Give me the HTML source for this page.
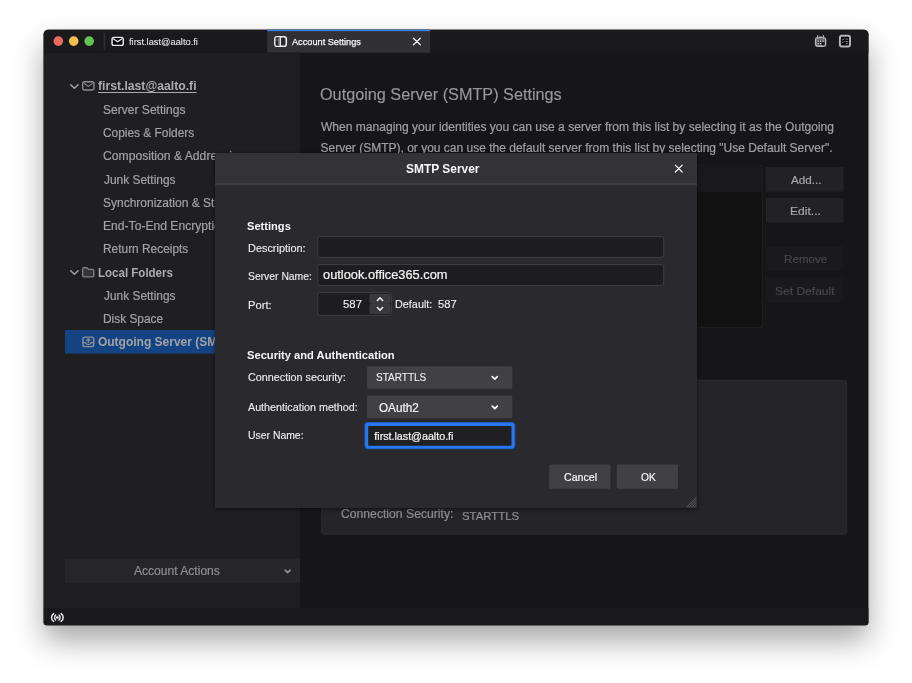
<!DOCTYPE html>
<html lang="en">
<head>
<meta charset="utf-8">
<title>Account Settings</title>
<style>
html,body{margin:0;padding:0;}
body{width:912px;height:683px;overflow:hidden;background:#fff;position:relative;
 font-family:"Liberation Sans",sans-serif;}
.abs{position:absolute;}
#shadow{position:absolute;left:44px;top:30px;width:824px;height:595px;border-radius:5px 5px 3px 3px;
 box-shadow:0 15px 30px rgba(0,0,0,0.36),0 0 1.5px rgba(0,0,0,0.4);}
#stage{position:absolute;left:0;top:0;width:912px;height:683px;}
.tl{position:absolute;left:0;top:0;width:912px;height:683px;will-change:transform;}
.t{position:absolute;white-space:pre;line-height:1;transform-origin:0 0;}
</style>
</head>
<body>
<div id="shadow"></div>
<div id="stage">

<svg class="abs" style="left:0;top:0" width="912" height="683" viewBox="0 0 912 683">
  <defs>
    <clipPath id="winclip">
      <path d="M43.65 34.3 a4.5 4.5 0 0 1 4.5 -4.5 H863.9 a4.5 4.5 0 0 1 4.5 4.5 V622.3 a3 3 0 0 1 -3 3 H46.65 a3 3 0 0 1 -3 -3 Z"/>
    </clipPath>
  </defs>
  <g clip-path="url(#winclip)">
    <rect x="40" y="25" width="835" height="605" fill="#161618"/>
    <!-- tab bar -->
    <rect x="40" y="25" width="835" height="27.7" fill="#1a1a1c"/>
    <rect x="267.1" y="25" width="163" height="27.7" fill="#313134"/>
    <rect x="267.1" y="25" width="163" height="6.15" fill="#3a84ea"/>
    <!-- sidebar / status -->
    <rect x="40" y="52.7" width="260" height="555.3" fill="#1f1f21"/>
    <rect x="40" y="608" width="835" height="22" fill="#19191b"/>
    <rect x="65" y="330" width="235" height="23.6" fill="#144383"/>
    <rect x="65" y="558.75" width="235" height="24.25" fill="#262628"/>
    <!-- list + buttons + details -->
    <rect x="321.3" y="165.8" width="441.2" height="161.4" fill="#111112" stroke="#252527" stroke-width="0.7"/>
    <rect x="321.7" y="166.2" width="440.4" height="25.8" fill="#19191b"/>
    <rect x="766" y="167" width="77.5" height="24.5" fill="#222224"/>
    <rect x="766" y="198" width="77.5" height="24.5" fill="#222224"/>
    <rect x="766" y="246.5" width="77.5" height="24.3" fill="#1a1a1c"/>
    <rect x="766" y="277.5" width="77.5" height="24.5" fill="#1a1a1c"/>
    <rect x="321.6" y="380.3" width="525.1" height="153.9" rx="2" fill="#252527" stroke="#323234" stroke-width="0.7"/>
  </g>

  <!-- traffic lights -->
  <circle cx="58.3" cy="41.1" r="4.8" fill="#ec6a5e"/>
  <circle cx="73.7" cy="41.1" r="4.8" fill="#f4bf4f"/>
  <circle cx="89.2" cy="41.1" r="4.8" fill="#61c554"/>
  <rect x="103.7" y="33.1" width="1.1" height="16.6" fill="#373739"/>
  <!-- mail icon -->
  <rect x="112.05" y="37.35" width="11.2" height="8" rx="1.9" fill="#050506" stroke="#ececee" stroke-width="1.45"/>
  <path d="M113.6 38.9 L117.65 41.8 L121.7 38.9" fill="none" stroke="#ececee" stroke-width="1.25" stroke-linecap="round" stroke-linejoin="round"/>
  <!-- account settings tab icon -->
  <rect x="274.9" y="36.7" width="11.4" height="9.6" rx="2.3" fill="#2a2a2c" stroke="#f1f1f2" stroke-width="1.6"/>
  <rect x="275.7" y="37.5" width="4" height="8" fill="#232324"/>
  <rect x="278" y="37.5" width="1.7" height="8" fill="#6e6e70"/>
  <rect x="276.6" y="39" width="0.9" height="2" fill="#8a8a8c"/>
  <rect x="279.65" y="36.8" width="1.3" height="9.4" fill="#f1f1f2"/>
  <!-- tab close -->
  <path d="M413.4 38.2 L420.3 44.8 M420.3 38.2 L413.4 44.8" stroke="#f2f2f3" stroke-width="1.25" stroke-linecap="round"/>
  <!-- calendar icon -->
  <rect x="815.7" y="37.8" width="9.8" height="8.3" rx="2.2" fill="#2c2c2e" stroke="#b7b7b9" stroke-width="1.6"/>
  <rect x="816.4" y="37.4" width="8.4" height="2.4" fill="#77777a"/>
  <path d="M817.6 35.7 v2.5 M823.5 35.7 v2.5" stroke="#b0b0b2" stroke-width="1.25" fill="none" stroke-linecap="round"/>
  <rect x="818.9" y="36.5" width="3.3" height="1.3" rx="0.4" fill="#c4c4c6"/>
  <g fill="#dededf">
    <rect x="817.3" y="40.4" width="1.5" height="1.4"/><rect x="819.8" y="40.4" width="1.5" height="1.4"/><rect x="822.3" y="40.4" width="1.5" height="1.4"/>
    <rect x="817.3" y="42.9" width="1.5" height="1.4"/><rect x="819.8" y="42.9" width="1.5" height="1.4"/>
  </g>
  <rect x="822" y="42.4" width="2.6" height="2.9" fill="#0c0c0d"/>
  <!-- tasks icon -->
  <rect x="839.9" y="35.75" width="10.1" height="10.65" rx="2" fill="#060607" stroke="#b4b4b6" stroke-width="1.95"/>
  <g stroke="#8a8a8c" stroke-width="0.95" fill="none">
    <path d="M845.6 39.1 h2.6 M845.6 41.5 h2.6 M845.6 43.7 h2.6"/>
    <path d="M842 39.4 l0.9 0.8 l1.6 -1.8 M842 42 l0.9 0.8 l1.6 -1.8" stroke-width="0.9"/>
  </g>

  <!-- sidebar chevrons -->
  <path d="M70.7 84.7 L74.4 88.3 L78.1 84.7" fill="none" stroke="#a3a3a6" stroke-width="1.45" stroke-linecap="round" stroke-linejoin="round"/>
  <path d="M70.7 270.7 L74.4 274.3 L78.1 270.7" fill="none" stroke="#a3a3a6" stroke-width="1.45" stroke-linecap="round" stroke-linejoin="round"/>
  <!-- mail icon -->
  <rect x="82.7" y="81.7" width="11.3" height="8.3" rx="1.8" fill="none" stroke="#8f8f92" stroke-width="1.35"/>
  <path d="M84.4 83.6 L88.35 86.4 L92.3 83.6" fill="none" stroke="#8f8f92" stroke-width="1.1" stroke-linecap="round" stroke-linejoin="round"/>
  <!-- folder icon -->
  <path d="M82.7 269 a1.3 1.3 0 0 1 1.3 -1.3 h2.9 l1.5 1.7 h4.1 a1.3 1.3 0 0 1 1.3 1.3 v4.9 a1.3 1.3 0 0 1 -1.3 1.3 h-8.5 a1.3 1.3 0 0 1 -1.3 -1.3 z" fill="#343436" stroke="#808083" stroke-width="1.35" stroke-linejoin="round"/>
  <!-- outbox icon -->
  <g fill="none" stroke="#8c9098" stroke-width="1.4" stroke-linecap="round" stroke-linejoin="round">
    <rect x="82.9" y="337.1" width="10.8" height="9.5" rx="1.8"/>
    <path d="M83 342.6 h2.6 q0.6 2 2.7 2 q2.1 0 2.7 -2 h2.6"/>
    <path d="M88.3 342.4 v-3.4 M86.7 340.3 l1.6 -1.5 l1.6 1.5" stroke-width="1.2"/>
  </g>
  <!-- account actions chevron -->
  <path d="M285.2 570.2 L287.7 572.7 L290.2 570.2" fill="none" stroke="#8f8f92" stroke-width="1.7" stroke-linecap="round" stroke-linejoin="round"/>
  <!-- status icon -->
  <g fill="none" stroke="#efeff0" stroke-linecap="round">
    <path d="M53.6 613.6 A4.7 4.7 0 0 0 53.6 621.4" stroke-width="1.45"/>
    <path d="M55.7 615 A3.4 3.4 0 0 0 55.7 620" stroke-width="1.35"/>
    <path d="M61.1 613.6 A4.7 4.7 0 0 1 61.1 621.4" stroke-width="1.45"/>
    <path d="M59 615 A3.4 3.4 0 0 1 59 620" stroke-width="1.35"/>
  </g>
  <circle cx="57.35" cy="617.5" r="1.35" fill="#f4f4f5"/>
</svg>

<div class="tl">
<div class="t" style="left:128.50px;top:37.00px;font-size:9.4px;color:#e6e6e8;transform:scaleX(0.9923);-webkit-text-stroke:0.08px #e6e6e8;">first.last@aalto.fi</div>
<div class="t" style="left:291.70px;top:37.00px;font-size:9.4px;color:#f6f6f7;transform:scaleX(0.9795);-webkit-text-stroke:0.25px #f6f6f7;">Account Settings</div>
<div class="t" style="left:97.80px;top:80.10px;font-size:12px;color:#acacaf;font-weight:700;transform:scaleX(1.0154);text-decoration:underline;text-underline-offset:2.2px;text-decoration-thickness:0.8px;">first.last@aalto.fi</div>
<div class="t" style="left:103.00px;top:103.75px;font-size:12px;color:#a2a2a5;transform:scaleX(1.0045);-webkit-text-stroke:0.2px #a2a2a5;">Server Settings</div>
<div class="t" style="left:102.91px;top:127.00px;font-size:12px;color:#a2a2a5;transform:scaleX(0.9913);-webkit-text-stroke:0.2px #a2a2a5;">Copies &amp; Folders</div>
<div class="t" style="left:102.89px;top:150.25px;font-size:12px;color:#a2a2a5;transform:scaleX(1.0130);-webkit-text-stroke:0.2px #a2a2a5;">Composition &amp; Addressing</div>
<div class="t" style="left:104.10px;top:173.50px;font-size:12px;color:#a2a2a5;transform:scaleX(0.9931);-webkit-text-stroke:0.2px #a2a2a5;">Junk Settings</div>
<div class="t" style="left:103.00px;top:196.75px;font-size:12px;color:#a2a2a5;-webkit-text-stroke:0.2px #a2a2a5;">Synchronization &amp; Storage</div>
<div class="t" style="left:103.49px;top:220.00px;font-size:12px;color:#a2a2a5;transform:scaleX(1.0100);-webkit-text-stroke:0.2px #a2a2a5;">End-To-End Encryption</div>
<div class="t" style="left:102.61px;top:243.25px;font-size:12px;color:#a2a2a5;transform:scaleX(0.9913);-webkit-text-stroke:0.2px #a2a2a5;">Return Receipts</div>
<div class="t" style="left:98.03px;top:266.50px;font-size:12px;color:#acacaf;font-weight:700;transform:scaleX(0.9603);">Local Folders</div>
<div class="t" style="left:104.10px;top:289.75px;font-size:12px;color:#a2a2a5;transform:scaleX(0.9931);-webkit-text-stroke:0.2px #a2a2a5;">Junk Settings</div>
<div class="t" style="left:102.61px;top:313.00px;font-size:12px;color:#a2a2a5;transform:scaleX(0.9904);-webkit-text-stroke:0.2px #a2a2a5;">Disk Space</div>
<div class="t" style="left:97.90px;top:336.25px;font-size:12px;color:#a2a2a3;font-weight:700;">Outgoing Server (SMTP)</div>
<div class="t" style="left:133.90px;top:565.40px;font-size:12px;color:#8f8f92;transform:scaleX(1.0053);-webkit-text-stroke:0.2px #8f8f92;">Account Actions</div>
<div class="t" style="left:320.29px;top:87.00px;font-size:16px;color:#97979a;transform:scaleX(1.0143);-webkit-text-stroke:0.15px #97979a;">Outgoing Server (SMTP) Settings</div>
<div class="t" style="left:321.00px;top:121.25px;font-size:12px;color:#a0a0a3;transform:scaleX(1.0041);-webkit-text-stroke:0.2px #a0a0a3;">When managing your identities you can use a server from this list by selecting it as the Outgoing</div>
<div class="t" style="left:320.50px;top:141.75px;font-size:12px;color:#a0a0a3;-webkit-text-stroke:0.2px #a0a0a3;">Server (SMTP), or you can use the default server from this list by selecting &quot;Use Default Server&quot;.</div>
<div class="t" style="left:790.75px;top:174.60px;font-size:11.8px;color:#a8a8ab;transform:scaleX(0.9882);-webkit-text-stroke:0.2px #a8a8ab;">Add...</div>
<div class="t" style="left:790.08px;top:205.60px;font-size:11.8px;color:#a8a8ab;transform:scaleX(1.0251);-webkit-text-stroke:0.2px #a8a8ab;">Edit...</div>
<div class="t" style="left:783.61px;top:254.30px;font-size:11.8px;color:#48484b;transform:scaleX(0.9865);-webkit-text-stroke:0.2px #48484b;">Remove</div>
<div class="t" style="left:775.49px;top:285.50px;font-size:11.8px;color:#48484b;transform:scaleX(1.0208);-webkit-text-stroke:0.2px #48484b;">Set Default</div>
<div class="t" style="left:341.14px;top:508.00px;font-size:12px;color:#8e8e91;transform:scaleX(1.0152);-webkit-text-stroke:0.2px #8e8e91;">Connection Security:</div>
<div class="t" style="left:461.99px;top:511.00px;font-size:11.2px;color:#8e8e91;transform:scaleX(1.0181);-webkit-text-stroke:0.2px #8e8e91;">STARTTLS</div>
</div>

<!-- dialog -->
<svg class="abs" style="left:0;top:0" width="912" height="683" viewBox="0 0 912 683">
  <defs>
    <filter id="dsh" x="-10%" y="-10%" width="120%" height="120%"><feGaussianBlur stdDeviation="2"/></filter>
  </defs>
  <rect x="215" y="154" width="482" height="355" fill="rgba(0,0,0,0.55)" filter="url(#dsh)"/>
  <rect x="215" y="153" width="482" height="355" fill="#2a2a2e"/>
  <rect x="215" y="153" width="482" height="30.3" fill="#333337"/>
  <rect x="215" y="183.2" width="482" height="1.6" fill="#454549"/>
  <path d="M675.3 165.1 L682.2 172 M682.2 165.1 L675.3 172" stroke="#f4f4f5" stroke-width="1.25" stroke-linecap="round"/>
  <!-- resizer -->
  <g stroke="#77777b" stroke-width="0.7">
    <path d="M686.4 507.4 L696.4 497.4 M689 507.4 L696.4 500 M691.6 507.4 L696.4 502.6 M694.2 507.4 L696.4 505.2"/>
  </g>
  <!-- inputs -->
  <g fill="#1d1d1f" stroke="#424246" stroke-width="0.9">
    <rect x="317.8" y="236.6" width="345.9" height="20.8" rx="1.5"/>
    <rect x="317.8" y="264.6" width="345.9" height="20.8" rx="1.5"/>
    <rect x="317.8" y="292.6" width="73.5" height="22.7" rx="1.5"/>
  </g>
  <g fill="#414144">
    <rect x="370" y="294.5" width="20" height="8.8" rx="1" fill="#39393c" stroke="#49494c" stroke-width="0.7"/>
    <rect x="370" y="304.4" width="20" height="8.9" rx="1" fill="#39393c" stroke="#49494c" stroke-width="0.7"/>
    <rect x="367" y="366.2" width="145.3" height="22.6" rx="1.5"/>
    <rect x="367" y="395.5" width="145.3" height="22.8" rx="1.5"/>
    <rect x="549.2" y="464.4" width="61.3" height="24.4" rx="1.5"/>
    <rect x="616.8" y="464.4" width="61.3" height="24.4" rx="1.5"/>
  </g>
  <rect x="364.4" y="422" width="150.9" height="27.3" rx="3.7" fill="#1c55b2"/>
  <rect x="365.2" y="422.8" width="149.3" height="25.7" rx="3" fill="#2877f0"/>
  <rect x="368.2" y="425.9" width="143.3" height="19.9" rx="0.8" fill="#202022"/>
  <g fill="none" stroke="#f4f4f5" stroke-width="1.3" stroke-linecap="round" stroke-linejoin="round">
    <path d="M492.3 376.7 L494.8 379.2 L497.3 376.7" stroke-width="1.8"/>
    <path d="M492.3 406.1 L494.8 408.6 L497.3 406.1" stroke-width="1.8"/>
    <path d="M377.4 300.5 L380 297.7 L382.6 300.5" stroke-width="1.5"/>
    <path d="M377.4 307.5 L380 310.3 L382.6 307.5" stroke-width="1.5"/>
  </g>
</svg>

<div class="tl">
<div class="t" style="left:405.96px;top:163.00px;font-size:12.5px;color:#f6f6f7;font-weight:700;transform:scaleX(0.9556);">SMTP Server</div>
<div class="t" style="left:246.86px;top:221.00px;font-size:11.3px;color:#f6f6f7;font-weight:700;transform:scaleX(0.9831);">Settings</div>
<div class="t" style="left:247.56px;top:243.75px;font-size:10.4px;color:#ededee;transform:scaleX(1.0504);-webkit-text-stroke:0.12px #ededee;">Description:</div>
<div class="t" style="left:248.00px;top:272.00px;font-size:10.4px;color:#ededee;transform:scaleX(0.9966);-webkit-text-stroke:0.12px #ededee;">Server Name:</div>
<div class="t" style="left:323.39px;top:268.75px;font-size:12.5px;color:#f6f6f7;transform:scaleX(1.0261);-webkit-text-stroke:0.2px #f6f6f7;">outlook.office365.com</div>
<div class="t" style="left:247.54px;top:300.75px;font-size:10.4px;color:#ededee;transform:scaleX(1.0802);-webkit-text-stroke:0.12px #ededee;">Port:</div>
<div class="t" style="left:343.31px;top:300.00px;font-size:10.4px;color:#ededee;transform:scaleX(1.0930);-webkit-text-stroke:0.12px #ededee;">587</div>
<div class="t" style="left:395.07px;top:300.00px;font-size:10.4px;color:#ededee;transform:scaleX(1.0424);-webkit-text-stroke:0.12px #ededee;">Default:</div>
<div class="t" style="left:438.07px;top:300.00px;font-size:10.4px;color:#ededee;transform:scaleX(1.0778);-webkit-text-stroke:0.12px #ededee;">587</div>
<div class="t" style="left:246.85px;top:350.30px;font-size:11.3px;color:#f6f6f7;font-weight:700;transform:scaleX(0.9866);">Security and Authentication</div>
<div class="t" style="left:247.88px;top:373.25px;font-size:10.4px;color:#ededee;transform:scaleX(1.0384);-webkit-text-stroke:0.12px #ededee;">Connection security:</div>
<div class="t" style="left:375.86px;top:373.20px;font-size:10.4px;color:#ededee;transform:scaleX(0.9637);-webkit-text-stroke:0.12px #ededee;">STARTTLS</div>
<div class="t" style="left:248.40px;top:402.50px;font-size:10.4px;color:#ededee;transform:scaleX(1.0323);-webkit-text-stroke:0.12px #ededee;">Authentication method:</div>
<div class="t" style="left:378.78px;top:402.00px;font-size:12.5px;color:#f6f6f7;transform:scaleX(0.9374);-webkit-text-stroke:0.2px #f6f6f7;">OAuth2</div>
<div class="t" style="left:247.60px;top:430.75px;font-size:10.4px;color:#ededee;transform:scaleX(1.0021);-webkit-text-stroke:0.12px #ededee;">User Name:</div>
<div class="t" style="left:374.30px;top:430.60px;font-size:10.7px;color:#f6f6f7;-webkit-text-stroke:0.2px #f6f6f7;">first.last@aalto.fi</div>
<div class="t" style="left:564.26px;top:471.50px;font-size:10.9px;color:#f6f6f7;transform:scaleX(0.9784);-webkit-text-stroke:0.2px #f6f6f7;">Cancel</div>
<div class="t" style="left:640.78px;top:471.50px;font-size:10.9px;color:#f6f6f7;transform:scaleX(0.9388);-webkit-text-stroke:0.2px #f6f6f7;">OK</div>
</div>

</div>
</body>
</html>
